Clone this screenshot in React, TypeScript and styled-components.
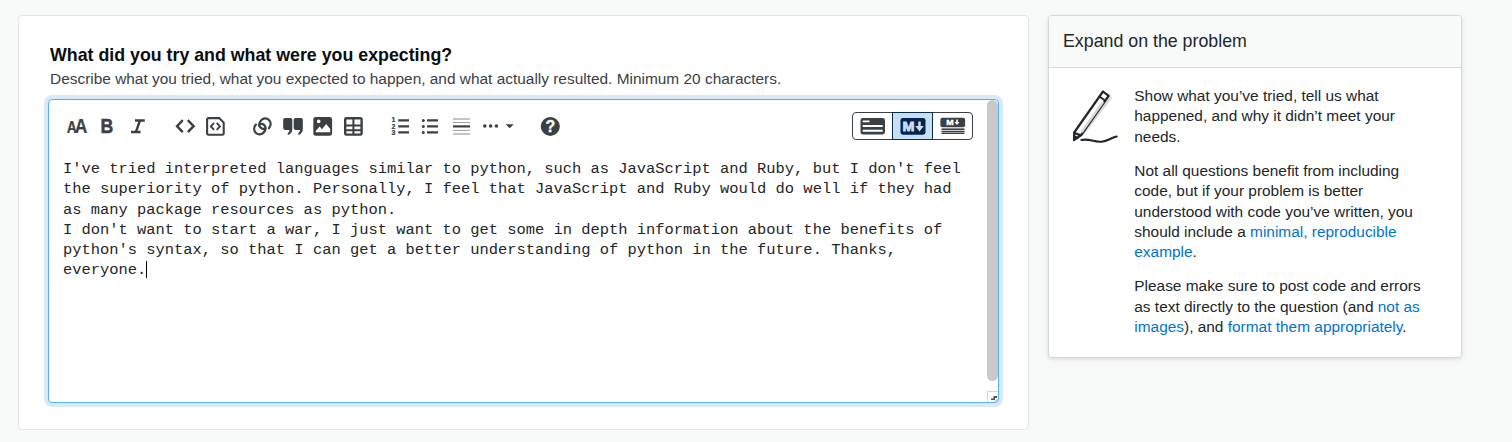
import React from "react";
import styled, { createGlobalStyle } from "styled-components";

const GlobalStyle = createGlobalStyle`
  * { box-sizing: border-box; }
  body {
    margin: 0;
    background: #f8faf9;
    color: #232629;
    font-family: "Liberation Sans", Arial, sans-serif;
    overflow: hidden;
  }
  p, h2 { margin: 0; }
`;

const ink = "#3b4045";

const Page = styled.main`
  display: flex;
  align-items: flex-start;
  gap: 19px;
  height: 442px;
  padding: 15px 50px 0 18px;
`;

const QuestionCard = styled.section`
  width: 1011px;
  height: 415px;
  padding: 29px 29px 0;
  background: #fff;
  border: 1px solid #e3e6e8;
  border-radius: 4px;
`;

const Title = styled.h2`
  padding-left: 2px;
  font-size: 17.8px;
  line-height: 20px;
  font-weight: 700;
  color: #0c0d0e;
`;

const Description = styled.p`
  padding: 3px 0 0 2px;
  color: #3b4045;
  font-size: 15.43px;
  line-height: 22px;
`;

const Editor = styled.div`
  display: flex;
  width: 951px;
  height: 304px;
  margin-top: 9px;
  background: #fff;
  border: 1px solid #59b0ee;
  border-radius: 4px;
  box-shadow: 0 0 0 4px #d9eaf7;
`;

const EditorBody = styled.div`
  width: 938px;
  display: flex;
  flex-direction: column;
`;

const Toolbar = styled.div`
  display: flex;
  align-items: center;
  height: 52px;
  padding: 0 14px 0 13.4px;
`;

const ToolGroup = styled.div`
  display: flex;
  margin-right: 16.6px;
`;

const ToolButton = styled.button<{ $width?: number }>`
  display: flex;
  align-items: center;
  justify-content: center;
  width: ${(p) => p.$width ?? 30.3}px;
  height: 29px;
  padding: 0;
  border: 0;
  background: none;
  color: ${ink};
`;

const ModeSwitch = styled.div`
  display: flex;
  width: 121px;
  height: 28px;
  margin-left: auto;
  border: 1px solid ${ink};
  border-radius: 4px;
`;

const ModeButton = styled.button<{ $active?: boolean }>`
  display: flex;
  align-items: center;
  justify-content: center;
  width: ${(p) => (p.$active ? 41 : 39)}px;
  margin: ${(p) => (p.$active ? "-1px 0" : "0")};
  padding: 0;
  border: ${(p) => (p.$active ? "1px solid #0a2b47" : "0")};
  background: ${(p) => (p.$active ? "#c6dff3" : "none")};
  color: ${(p) => (p.$active ? "#03254a" : ink)};
`;

const Draft = styled.div`
  width: 920px;
  padding: 7px 0 0 14px;
  font-family: "Liberation Mono", monospace;
  font-size: 15.43px;
  line-height: 20.25px;
  color: #232629;
`;

const Caret = styled.span`
  display: inline-block;
  width: 1px;
  height: 17px;
  vertical-align: -4px;
  background: #000;
`;

const ScrollTrack = styled.div`
  display: flex;
  flex-direction: column;
  justify-content: space-between;
  width: 11px;
`;

const ScrollThumb = styled.div`
  height: 281px;
  border-radius: 6px;
  background: #c9c9c9;
`;

const ResizeGrip = styled.div`
  display: flex;
  width: 11px;
  height: 11px;
  border: 1px solid #d5d5d5;
  border-width: 1px 0 0 1px;
`;

const HintCard = styled.aside`
  width: 414px;
  height: 343px;
  background: #fff;
  border: 1px solid #d6d9dc;
  border-radius: 4px;
  box-shadow: 0 1px 2px rgba(0, 0, 0, 0.05), 0 1px 4px rgba(0, 0, 0, 0.05),
    0 2px 8px rgba(0, 0, 0, 0.05);
`;

const HintHeader = styled.header`
  height: 52px;
  padding: 0 14px;
  border-bottom: 1px solid #d6d9dc;
  border-radius: 3px 3px 0 0;
  background: #f8f9f9;
  font-size: 17.8px;
  line-height: 50px;
`;

const HintBody = styled.div`
  display: flex;
  padding: 17.9px 14px 0 21px;
`;

const HintText = styled.div`
  display: flex;
  flex-direction: column;
  gap: 13.9px;
  width: 300px;
  margin-left: 15.3px;
  font-size: 15.43px;
  line-height: 20.34px;
`;

const Link = styled.a`
  color: #0074cc;
`;

const Glyph = styled.text`
  font-family: "Liberation Sans", Arial, sans-serif;
  font-weight: 700;
  fill: currentColor;
`;

const IconSvg = styled.svg`
  flex: none;
  overflow: visible;
  fill: currentColor;
`;

const Icon = ({ w = 20, h = 20, children }: { w?: number; h?: number; children: React.ReactNode }) => (
  <IconSvg width={w} height={h} viewBox={`0 0 ${w} ${h}`} aria-hidden>
    {children}
  </IconSvg>
);

const line = { fill: "none", stroke: "currentColor" } as const;

const HeadingIcon = () => (
  <Icon w={22}>
    <Glyph x="-0.3" y="17" fontSize="16.5" stroke="currentColor" strokeWidth="0.2" textLength="10" lengthAdjust="spacingAndGlyphs">A</Glyph>
    <Glyph x="7.8" y="17" fontSize="20" stroke="currentColor" strokeWidth="0.2" textLength="12.6" lengthAdjust="spacingAndGlyphs">A</Glyph>
  </Icon>
);
const BoldIcon = () => (
  <Icon>
    <Glyph x="2.6" y="17" fontSize="19.5" stroke="currentColor" strokeWidth="0.5" textLength="12.8" lengthAdjust="spacingAndGlyphs">B</Glyph>
  </Icon>
);
const ItalicIcon = () => (
  <Icon>
    <path d="M7 4.6h9.8M3 16.1h9.6M12 4.3 7.8 16.3" {...line} strokeWidth="2.5" />
  </Icon>
);
const CodeIcon = () => (
  <Icon>
    <path d="M7.8 4.2 2 10.2l5.8 6M12.8 4.2l5.8 6-5.8 6" {...line} strokeWidth="2.4" />
  </Icon>
);
const CodeBlockIcon = () => (
  <Icon>
    <g transform="translate(0.4 0.4)">
      <path d="M3 1.7h10.8l4.5 4.5V17a1.3 1.3 0 0 1-1.3 1.3H3A1.3 1.3 0 0 1 1.7 17V3A1.3 1.3 0 0 1 3 1.7Z" {...line} strokeWidth="2.1" />
      <path d="M8.7 6.5 5.5 10l3.2 3.5M11.3 6.5l3.2 3.5-3.2 3.5" {...line} strokeWidth="1.9" />
    </g>
  </Icon>
);
const LinkIcon = () => (
  <Icon>
    <g {...line} strokeWidth="2.3" strokeLinecap="round" transform="translate(0.4 0.4)">
      <path d="M3.5 8.2c-2.4 2.8-2.2 6.3.1 8.4 2.5 2.3 5.8 1.8 7.9-.8 2-2.5 2.1-5.3.2-7.2-.9-.9-2.2-1.3-3.4-1" />
      <path d="M16.5 11.8c2.4-2.8 2.2-6.3-.1-8.4-2.5-2.3-5.8-1.8-7.9.8-2 2.5-2.1 5.3-.2 7.2.9.9 2.2 1.3 3.4 1" />
    </g>
  </Icon>
);
const QuoteIcon = () => (
  <Icon>
    <path transform="translate(0 0.4)" d="M2 1.5h5.5A1.8 1.8 0 0 1 9.3 3.3v9.2c0 3.2-1.6 5.1-4.5 6v-2c1.1-.7 1.6-1.5 1.7-3H2a1.8 1.8 0 0 1-1.8-1.8V3.3A1.8 1.8 0 0 1 2 1.5ZM12.5 1.5H18a1.8 1.8 0 0 1 1.8 1.8v9.2c0 3.2-1.6 5.1-4.5 6v-2c1.1-.7 1.6-1.5 1.7-3h-4.5a1.8 1.8 0 0 1-1.8-1.8V3.3a1.8 1.8 0 0 1 1.8-1.8Z" />
  </Icon>
);
const ImageIcon = () => (
  <Icon>
    <g transform="translate(-0.3 0.4)">
      <rect x="0.6" y="0.6" width="18.8" height="18.8" rx="2.4" />
      <circle cx="6" cy="5" r="1.8" fill="#fff" />
      <path d="M3 15.8v-1.3l4-4.3 2.3 2.7 4.2-5.2 4 5v3.1Z" fill="#fff" />
    </g>
  </Icon>
);
const TableIcon = () => (
  <Icon>
    <g transform="translate(0.4 0.4)">
      <rect x="0.6" y="0.6" width="18.8" height="18.8" rx="2.4" />
      <path d="M3 3h6v5.2H3zM11 3h6v5.2h-6zM3 10.2h6v2.6H3zM11 10.2h6v2.6h-6zM3 14.8h6v2.4H3zM11 14.8h6v2.4h-6z" fill="#fff" />
    </g>
  </Icon>
);
const NumberedIcon = () => (
  <Icon>
    <Glyph x="1.6" y="6.4" fontSize="7" stroke="currentColor" strokeWidth="0.2">1</Glyph>
    <Glyph x="1.6" y="12.7" fontSize="7" stroke="currentColor" strokeWidth="0.2">2</Glyph>
    <Glyph x="1.6" y="19.1" fontSize="7" stroke="currentColor" strokeWidth="0.2">3</Glyph>
    <path d="M8.2 4.4H19M8.2 10.4H19M8.2 16.4H19" {...line} strokeWidth="2.1" />
  </Icon>
);
const BulletIcon = () => (
  <Icon>
    <path d="M7 4.4h11M7 10.4h11M7 16.4h11" {...line} strokeWidth="2.1" />
    <circle cx="3.3" cy="4.4" r="1.5" />
    <circle cx="3.3" cy="10.4" r="1.5" />
    <circle cx="3.3" cy="16.4" r="1.5" />
  </Icon>
);
const RuleIcon = () => (
  <Icon>
    <path d="M2 2.9h17M2 17.9h17" {...line} strokeWidth="2" opacity="0.3" />
    <path d="M2 6.5h17M2 14.4h17" {...line} strokeWidth="1" opacity="0.5" />
    <path d="M2 10.4h17" {...line} strokeWidth="2.2" />
  </Icon>
);
const MoreIcon = () => (
  <Icon w={36}>
    <circle cx="5.8" cy="10" r="1.8" />
    <circle cx="11.6" cy="10" r="1.8" />
    <circle cx="17.4" cy="10" r="1.8" />
    <path d="M26.6 8.3h8.2l-4.1 4Z" />
  </Icon>
);
const HelpIcon = () => (
  <Icon>
    <circle cx="10.3" cy="10.4" r="9.5" />
    <Glyph x="10.3" y="16" fontSize="16" textAnchor="middle" strokeWidth="0.3" stroke="#fff" style={{ fill: "#fff" }}>?</Glyph>
  </Icon>
);

const RichModeIcon = () => (
  <Icon w={26} h={18}>
    <rect x="0.5" y="1" width="24.5" height="16.4" rx="2.4" />
    <path d="M2.7 3.4h6.8v1.9H2.7zM2.7 8h20v1.9h-20zM2.7 12.8h20v2h-20z" fill="#fff" />
  </Icon>
);
const MarkdownIcon = () => (
  <Icon w={26} h={18}>
    <rect x="0.5" y="0.9" width="25" height="16.8" rx="2.4" />
    <g style={{ color: "#c6dff3" }}>
      <Glyph x="2.4" y="14" fontSize="13.3" stroke="currentColor" strokeWidth="0.8" textLength="12" lengthAdjust="spacingAndGlyphs">M</Glyph>
      <path d="M19.5 4.5v7" {...line} strokeWidth="2.5" />
      <path d="M15.2 9h8.6l-4.3 5.4Z" fill="currentColor" />
    </g>
  </Icon>
);
const PreviewModeIcon = () => (
  <Icon w={26} h={18}>
    <rect x="0.4" y="0.8" width="24.7" height="9.4" rx="2" />
    <g style={{ color: "#fff" }}>
      <Glyph x="6.2" y="7.7" fontSize="7.2" stroke="currentColor" strokeWidth="0.4" textLength="7.4" lengthAdjust="spacingAndGlyphs">M</Glyph>
      <path d="M17 2.4v3" {...line} strokeWidth="1.6" />
      <path d="M14.5 5h5L17 8Z" fill="currentColor" />
    </g>
    <path d="M1.5 12.2h23" {...line} strokeWidth="1.6" />
    <path d="M1.5 16.4h23M1.5 14.5h23" {...line} strokeWidth="1.3" />
  </Icon>
);

const PencilDrawing = () => (
  <svg width="49" height="60" viewBox="0 0 49 60" fill="none" aria-hidden>
    <path d="M13 50 42 12l-3-5-6 4L8 45Z" fill="#d8d9da" />
    <g stroke="#232629" strokeLinecap="round" strokeLinejoin="round">
      <path d="M4 54 4.2 46.5 33 5.5l5.6 4.3L11.2 49 4 54Z" fill="#fff" strokeWidth="2.2" />
      <path d="m12 45.5 20.5-29" stroke="#d8d9da" strokeWidth="2.6" />
      <path d="M29.5 10.5 35.2 14.8" strokeWidth="1.9" />
      <path d="m4.4 47 6.2 2.4M4.5 50.4l3 1.6" strokeWidth="2.2" />
      <path d="M11.4 54c8-2 12 2.6 20.3 1.7 6.4-.7 8-3.4 15-5.2" strokeWidth="2.1" />
    </g>
  </svg>
);

export default function App() {
  return (
    <>
      <GlobalStyle />
      <Page>
        <QuestionCard>
          <Title>What did you try and what were you expecting?</Title>
          <Description>
            Describe what you tried, what you expected to happen, and what actually resulted. Minimum 20 characters.
          </Description>
          <Editor>
            <EditorBody>
              <Toolbar>
                <ToolGroup>
                  <ToolButton><HeadingIcon /></ToolButton>
                  <ToolButton><BoldIcon /></ToolButton>
                  <ToolButton><ItalicIcon /></ToolButton>
                </ToolGroup>
                <ToolGroup>
                  <ToolButton><CodeIcon /></ToolButton>
                  <ToolButton><CodeBlockIcon /></ToolButton>
                </ToolGroup>
                <ToolGroup>
                  <ToolButton><LinkIcon /></ToolButton>
                  <ToolButton><QuoteIcon /></ToolButton>
                  <ToolButton><ImageIcon /></ToolButton>
                  <ToolButton><TableIcon /></ToolButton>
                </ToolGroup>
                <ToolGroup>
                  <ToolButton><NumberedIcon /></ToolButton>
                  <ToolButton><BulletIcon /></ToolButton>
                  <ToolButton><RuleIcon /></ToolButton>
                  <ToolButton $width={43}><MoreIcon /></ToolButton>
                </ToolGroup>
                <ToolButton><HelpIcon /></ToolButton>
                <ModeSwitch>
                  <ModeButton><RichModeIcon /></ModeButton>
                  <ModeButton $active><MarkdownIcon /></ModeButton>
                  <ModeButton><PreviewModeIcon /></ModeButton>
                </ModeSwitch>
              </Toolbar>
              <Draft>
                <p>
                  I've tried interpreted languages similar to python, such as JavaScript and Ruby, but I don't feel
                  the superiority of python. Personally, I feel that JavaScript and Ruby would do well if they had as
                  many package resources as python.
                </p>
                <p>
                  I don't want to start a war, I just want to get some in depth information about the benefits of
                  python's syntax, so that I can get a better understanding of python in the future. Thanks,
                  everyone.<Caret />
                </p>
              </Draft>
            </EditorBody>
            <ScrollTrack>
              <ScrollThumb />
              <ResizeGrip>
                <svg width="10" height="10" viewBox="0 0 10 10" aria-hidden>
                  <path d="M5.5 4H9v2H7v2H3V6.5h2.5Z" fill="#555" />
                  <path d="M6 9h3V7" fill="none" stroke="#bbb" />
                </svg>
              </ResizeGrip>
            </ScrollTrack>
          </Editor>
        </QuestionCard>
        <HintCard>
          <HintHeader>Expand on the problem</HintHeader>
          <HintBody>
            <PencilDrawing />
            <HintText>
              <p>Show what you’ve tried, tell us what happened, and why it didn’t meet your needs.</p>
              <p>
                Not all questions benefit from including code, but if your problem is better understood with code
                you’ve written, you should include a <Link>minimal, reproducible example</Link>.
              </p>
              <p>
                Please make sure to post code and errors as text directly to the question (and{" "}
                <Link>not as images</Link>), and <Link>format them appropriately</Link>.
              </p>
            </HintText>
          </HintBody>
        </HintCard>
      </Page>
    </>
  );
}
